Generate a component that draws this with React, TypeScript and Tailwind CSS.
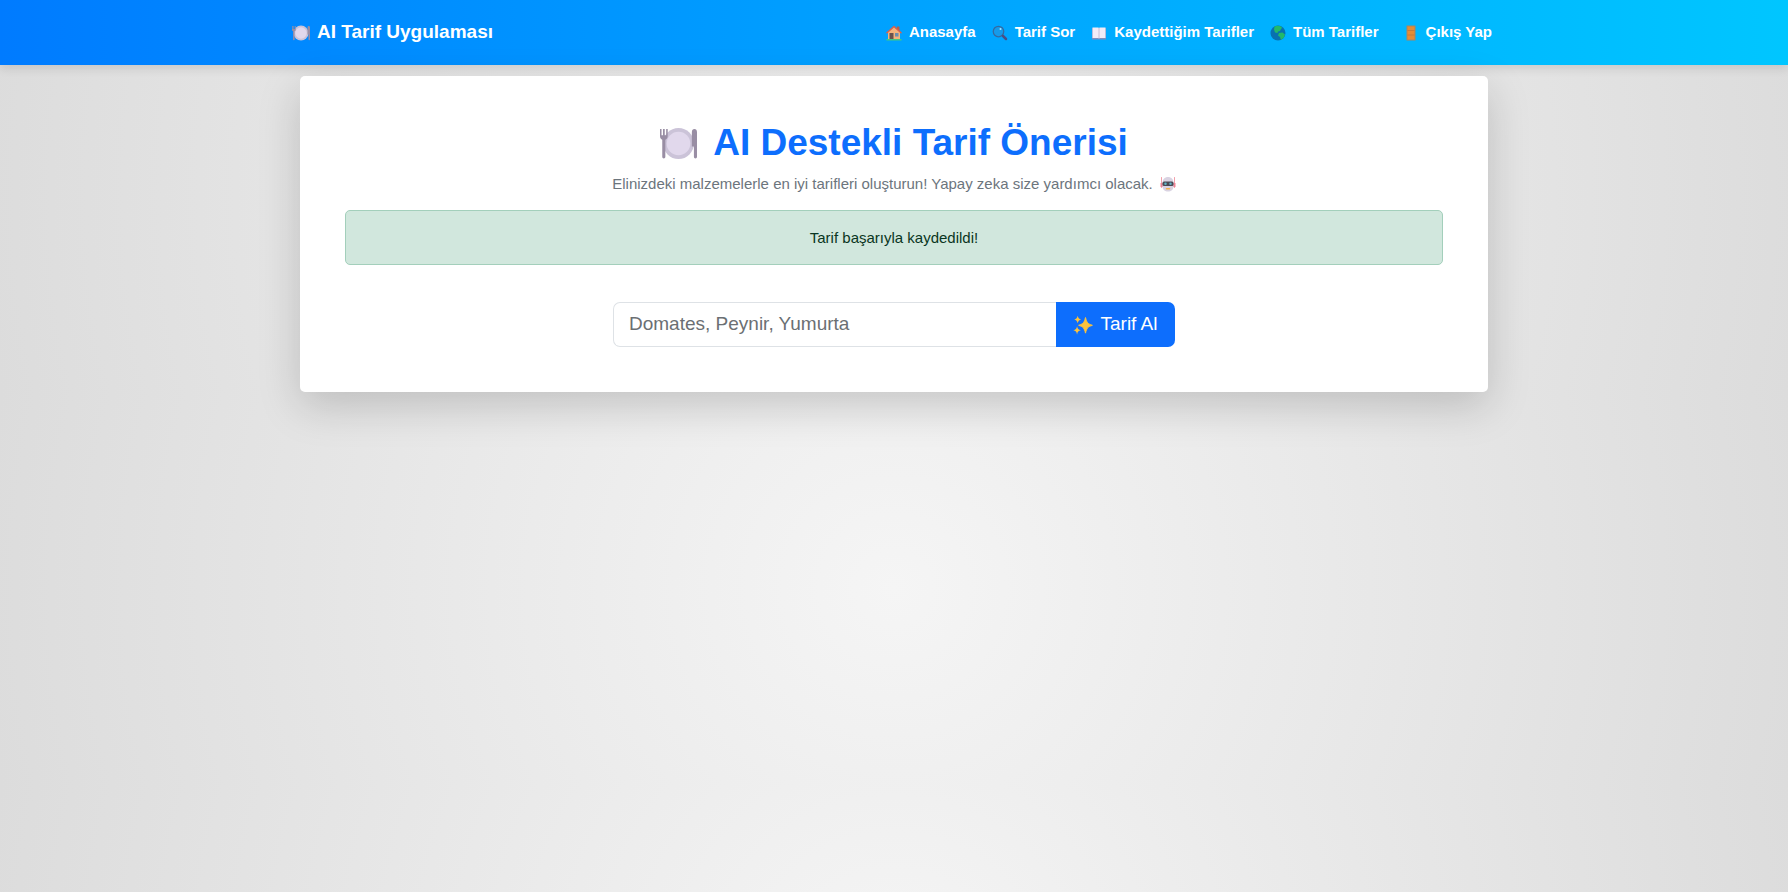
import React, { useState } from 'react';

type IconProps = { className: string };

function PlateIcon({ className }: IconProps) {
  return (
    <svg className={className} viewBox="0 0 36 32" aria-hidden="true">
      <circle cx="18" cy="16" r="15" fill="#cbc3d8" />
      <circle cx="18" cy="16" r="11.500" fill="#e1d8ec" />
      <path d="M0 2v7c0 2 1 3 2.200 3.400V29c0 2 3 2 3 0V12.400C6.400 12 7.500 11 7.500 9V2H6v6H4.600V2H2.900v6H1.500V2z" fill="#998ea4" />
      <path d="M31 29V5c0-2 1-3 2.500-3S36 3 36 5v24c0 2-3 2-3 0V19h-2z" fill="#998ea4" />
    </svg>
  );
}

function HouseIcon({ className }: IconProps) {
  return (
    <svg className={className} viewBox="0 0 32 32" aria-hidden="true">
      <path d="M22 3h5v11h-5z" fill="#b4604c" />
      <path d="M4 14 16 4l12 10v15H4z" fill="#f2b47c" />
      <path d="M7 16h8v13H7z" fill="#67534e" />
      <path d="M18 16h7v7h-7z" fill="#6b8fae" />
      <path d="M1 28h30v3H1z" fill="#43c883" />
      <path d="M2 15.500 16 3l14 12.500" fill="none" stroke="#dd5f4a" strokeWidth="3" strokeLinecap="round" strokeLinejoin="round" />
    </svg>
  );
}

function SearchIcon({ className }: IconProps) {
  return (
    <svg className={className} viewBox="0 0 32 32" aria-hidden="true">
      <circle cx="13" cy="13" r="10.500" fill="#159bea" stroke="#36699f" strokeWidth="2.500" />
      <circle cx="17" cy="8" r="2" fill="#a9e5ff" />
      <path d="m22 22 6 6" stroke="#4a4f86" strokeWidth="5" strokeLinecap="round" />
    </svg>
  );
}

function BookIcon({ className }: IconProps) {
  return (
    <svg className={className} viewBox="0 0 32 32" aria-hidden="true">
      <path d="M2 6h28v23H2z" fill="#7f8fc0" />
      <path d="M3 5h12l1 1.500L17 5h12v21H17l-1 1-1-1H3z" fill="#f1ecf8" />
      <path d="M16 6v21" stroke="#b9b0cd" strokeWidth="1.500" />
    </svg>
  );
}

function GlobeIcon({ className }: IconProps) {
  return (
    <svg className={className} viewBox="0 0 32 32" aria-hidden="true">
      <circle cx="16" cy="16" r="15" fill="#0871b0" />
      <path d="M9 3c3-2 9-2.500 13 0 3 2 2 4 0 5l-2 4-4 1-1 3-5-1-2-6z" fill="#22b96b" />
      <path d="m18 16 7-1 5 4-2 6-6 5-2-6-4-3z" fill="#22b96b" />
    </svg>
  );
}

function DoorIcon({ className }: IconProps) {
  return (
    <svg className={className} viewBox="0 0 32 32" aria-hidden="true">
      <path d="M7 1h18v30H7z" fill="#a98560" />
      <path d="M9 3h14v26H9z" fill="#e58c35" />
      <path d="M9 11h14M9 20h14" stroke="#b9753f" strokeWidth="1.500" />
    </svg>
  );
}

function RobotIcon({ className }: IconProps) {
  return (
    <svg className={className} viewBox="0 0 32 32" aria-hidden="true">
      <path d="M3 3v20M29 3v20" stroke="#f3a0ac" strokeWidth="2" strokeLinecap="round" />
      <path d="M1 14h5v8H1zM26 14h5v8h-5z" fill="#ef8494" />
      <path d="M5 14C5 6 10 2 16 2s11 4 11 12v7c0 6-5 10-11 10S5 27 5 21z" fill="#d9d3e2" />
      <rect x="5" y="11" width="22" height="9" rx="3" fill="#4b4a55" />
      <circle cx="11" cy="15.500" r="2.500" fill="#5fb3c2" />
      <circle cx="21" cy="15.500" r="2.500" fill="#5fb3c2" />
      <path d="M13 25.500h6" stroke="#f4b24e" strokeWidth="3" strokeLinecap="round" />
    </svg>
  );
}

function SparklesIcon({ className }: IconProps) {
  return (
    <svg className={className} viewBox="0 0 32 32" fill="#fcc23c" aria-hidden="true">
      <path d="M20 4c2 8 3.500 10 11 12.500-7.500 2.500-9 4.500-11 12.500-2-8-3.500-10-11-12.500C16.500 14 18 12 20 4z" stroke="#fcc23c" strokeWidth="1.500" strokeLinejoin="round" />
      <path d="M7.500 1c1 4 2 5 5.500 6-3.500 1-4.500 2-5.500 6C6.500 9 5.500 8 2 7c3.500-1 4.500-2 5.500-6z" />
      <path d="M6.500 18c1 4.500 2 5.500 6 6.500-4 1-5 2-6 6.500-1-4.500-2-5.500-6-6.500 4-1 5-2 6-6.500z" />
    </svg>
  );
}

const links = [
  { label: 'Anasayfa', Icon: HouseIcon },
  { label: 'Tarif Sor', Icon: SearchIcon },
  { label: 'Kaydettiğim Tarifler', Icon: BookIcon },
  { label: 'Tüm Tarifler', Icon: GlobeIcon },
];

export default function App() {
  const [ingredients, setIngredients] = useState('');

  return (
    <div className="min-h-screen bg-[radial-gradient(circle,#f5f5f5,#dcdcdc)] bg-[length:100%_392px] font-['Liberation_Sans',Arial,sans-serif] text-[#212529]">
      <nav className="bg-linear-to-r from-[#007bff] to-[#00c6ff] shadow-[0_4px_9px_rgba(0,0,0,0.1)]">
        <div className="mx-auto flex h-[65px] max-w-[1204px] items-center justify-between pr-1 font-bold text-white">
          <a href="#" className="flex items-center gap-[7px] text-[19px]">
            <PlateIcon className="h-4 w-[18px]" />
            AI Tarif Uygulaması
          </a>
          <div className="flex items-center gap-6 text-[15px]">
            <ul className="flex items-center gap-4">
              {links.map(({ label, Icon }) => (
                <li key={label}>
                  <a href="#" className="flex items-center gap-[7px]">
                    <Icon className="size-4" />
                    {label}
                  </a>
                </li>
              ))}
            </ul>
            <a href="#" className="flex items-center gap-[7px]">
              <DoorIcon className="size-4" />
              Çıkış Yap
            </a>
          </div>
        </div>
      </nav>

      <main className="mx-auto mt-[11px] max-w-[1188px] rounded-[5px] bg-white p-[45px] text-center shadow-[0_14px_43px_rgba(0,0,0,0.175)]">
        <h1 className="flex items-center justify-center gap-4 text-[37px] leading-[44px] font-bold text-[#0d6efd]">
          <PlateIcon className="h-[33px] w-[37px]" />
          AI Destekli Tarif Önerisi
        </h1>
        <p className="mt-2 flex items-center justify-center gap-[7px] text-[15px] leading-[21px] text-[#6c757d]">
          Elinizdeki malzemelerle en iyi tarifleri oluşturun! Yapay zeka size yardımcı olacak.
          <RobotIcon className="size-4" />
        </p>
        <div role="alert" className="mt-4 rounded-[5px] border border-[#a3cfbb] bg-[#d1e7dd] py-4 text-[15px] leading-[21px] text-[#0a3622]">
          Tarif başarıyla kaydedildi!
        </div>
        <form className="mx-auto mt-[37px] flex h-[45px] max-w-[562px]" onSubmit={(e) => e.preventDefault()}>
          <input
            type="text"
            aria-label="Malzemeler"
            placeholder="Domates, Peynir, Yumurta"
            value={ingredients}
            onChange={(e) => setIngredients(e.target.value)}
            className="min-w-0 flex-1 rounded-l-[7px] border border-r-0 border-[#dee2e6] px-[15px] text-[19px] placeholder:text-[#6b6f73]"
          />
          <button type="submit" className="flex w-[119px] items-center justify-center gap-[7px] rounded-r-[7px] bg-[#0d6efd] text-[19px] text-white">
            <SparklesIcon className="size-5" />
            Tarif Al
          </button>
        </form>
      </main>
    </div>
  );
}
